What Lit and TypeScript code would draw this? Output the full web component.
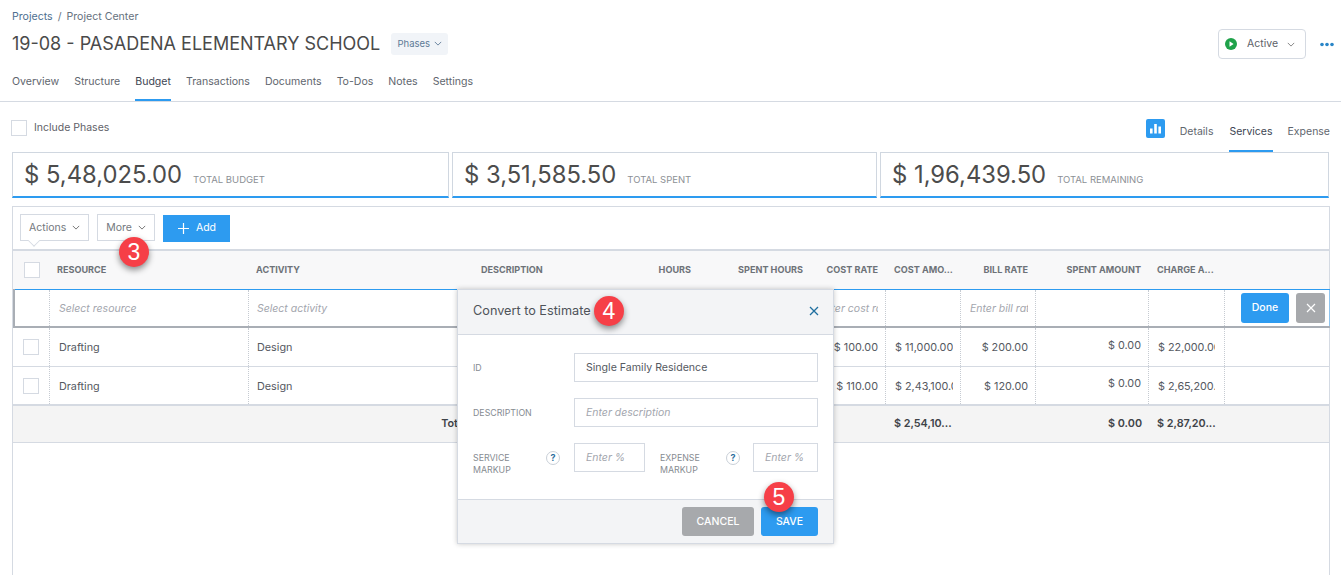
import { LitElement, html, css } from "lit";
import { customElement } from "lit/decorators.js";

const chev = html`<svg class="chev" viewBox="0 0 10 6" width="8" height="5"><path d="M1 1l4 4 4-4" fill="none" stroke="currentColor" stroke-width="1.1"/></svg>`;

@customElement("app-root")
export class AppRoot extends LitElement {
  static styles = css`
    :host { display: block; position: relative; height: 575px; overflow: hidden; background: #fff; font-family: Inter, "Liberation Sans", sans-serif; font-size: 11px; line-height: 12px; color: #555a60; }
    * { box-sizing: border-box; }
    .crumbs { padding: 11px 12px 0; height: 29px; font-size: 10.6px; color: #66717d; }
    .crumbs a { color: #4f6f90; }
    .crumbs i { font-style: normal; margin: 0 5px; }
    .titlebar { display: flex; align-items: center; height: 30px; padding: 0 7px 0 12px; }
    h1 { margin: 0; font-size: 18px; line-height: 22px; font-weight: 400; color: #4a4a4a; }
    .chip { margin: 0 0 1px 11px; height: 22px; width: 57px; display: flex; align-items: center; justify-content: center; gap: 4px; background: #f1f4f8; border-radius: 3px; font-size: 9.5px; color: #5d7a96; }
    .spacer { flex: 1; }
    .status { width: 88px; height: 30px; border: 1px solid #d5dae2; border-radius: 4px; display: flex; align-items: center; padding-left: 6px; color: #5c6168; font-size: 10.5px; }
    .status span { margin: 0 9px 0 10px; }
    .status .chev { color: #777; }
    .dots { margin-left: 14px; display: flex; }
    .tabs { display: flex; gap: 15px; height: 43px; padding-left: 12px; border-bottom: 1px solid #d5dae2; }
    .tab { height: 42px; padding-top: 17px; color: #5f666e; font-size: 10.55px; border-bottom: 2px solid transparent; }
    .tab.on { color: #3d4552; border-bottom-color: #2d9bf0; }
    .sub { display: flex; height: 50px; padding: 0 11px; }
    .include { display: flex; align-items: center; gap: 7px; color: #5f5f68; font-size: 10.5px; padding-top: 1px; }
    .box { display: block; width: 16px; height: 16px; border: 1px solid #d5dae2; background: #fff; flex: none; }
    .chart { align-self: flex-start; margin: 17px 15px 0 0; width: 19px; height: 19px; border-radius: 2px; background: #2d9bf0; display: flex; }
    .subtabs { display: flex; gap: 15px; }
    .subtab { height: 50px; padding-top: 24px; border-bottom: 2px solid transparent; color: #5f666e; font-size: 10.5px; }
    .subtab:first-child { margin-right: 1px; }
    .subtab.on { color: #3d4552; border-bottom-color: #2d9bf0; }
    .cards { display: flex; gap: 3px; margin: 0 12px; height: 46px; }
    .card { border: 1px solid #d0d7e0; border-bottom: 2px solid #2d9bf0; display: flex; align-items: baseline; padding: 8px 0 0 11px; }
    .card b { font-weight: 400; font-size: 23.8px; line-height: 28px; color: #4c4c4c; }
    .card span { margin-left: 11px; font-size: 9.5px; color: #8c9095; }
    .panel { margin: 8px 11px 0 12px; border: 1px solid #d5dae2; border-bottom: 0; height: 400px; }
    .bar { display: flex; height: 44px; padding: 7px 7px 0; gap: 8px; align-items: flex-start; border-bottom: 2px solid #d5dae2; }
    .btn { position: relative; height: 27px; border: 1px solid #d5dae2; display: flex; align-items: center; padding: 0 8px 0 8px; gap: 6px; font-size: 10.5px; color: #73787e; background: #fff; }
    .btn .chev { color: #666; }
    .notch { position: absolute; left: 8px; bottom: -6px; width: 10px; height: 10px; border: 1px solid #d5dae2; border-top: 0; border-left: 0; background: #fff; transform: rotate(45deg) scale(.8); }
    .add { margin-top: 1px; height: 27px; width: 67px; padding-bottom: 1px; background: #2d9bf0; color: #fff; display: flex; align-items: center; justify-content: center; gap: 6px; font-size: 10.5px; }
    .row { display: grid; grid-template-columns: 37px 199px 224px 160px 66px 112px 75px 75px 75px 113px 76px 1fr; }
    .row > div { padding: 0 7px 0 8px; display: flex; align-items: center; white-space: nowrap; overflow: hidden; }
    .clip { display: block; width: 100%; overflow: hidden; text-align: right; }
    .head { height: 38px; background: #f8f8f9; font-size: 9.1px; font-weight: 700; color: #6d7278; }
    .head > div { padding-right: 8px; }
    .row > div.r { justify-content: flex-end; }
    .head > div:first-child { padding: 0 0 0 11px; }
    .head > div.tight { padding-left: 7px; }
    .edit { height: 39px; margin-right: -1px; box-shadow: inset 2px 0 #a9aeb5, inset 0 -2px #a9aeb5, inset 0 1px #2d9bf0, inset -1px 0 #8fc4ee; }
    .edit > div, .data > div { border-right: 1px dotted #c6cbd2; }
    .edit > div { margin: 1px 0 2px; }
    .ph { color: #a3a6ae; font-style: italic; font-size: 10.5px; }
    .row.edit > div:last-child { border: 0; padding: 0 0 0 16px; gap: 7px; overflow: visible; }
    .row.edit > div.ph { padding-top: 1px; }
    .row.edit > div.first, .row.data > div.first { padding-left: 9px; }
    .row.edit > div.bill { padding-left: 9px; }
    .done { flex: none; width: 48px; height: 30px; border-radius: 3px; background: #2d9bf0; color: #fff; font-size: 10.5px; font-weight: 500; display: flex; align-items: center; justify-content: center; }
    .x { flex: none; width: 29px; height: 30px; border-radius: 3px; background: #a7a9ac; display: flex; align-items: center; justify-content: center; }
    .data { height: 39px; border-bottom: 1px solid #d5dae2; color: #55595f; font-size: 10.8px; }
    .data.last { border-bottom: 2px solid #d5dae2; }
    .row.data > div { padding-top: 1px; }
    .row.data.last > div { padding-top: 2px; }
    .row.data > div:first-child { padding: 0 0 0 10px; }
    .data > div:last-child { border: 0; }
    .row.data > div.up { padding-top: 0; padding-bottom: 3px; }
    .row.data > div.amount { padding-left: 9px; }
    .row.data > div.charge { padding: 1px 9px 0; }
    .row.data.last > div.charge { padding-top: 2px; }
    .total { height: 37px; background: #f4f4f4; border-bottom: 1px solid #d5dae2; font-weight: 600; color: #3f4348; font-size: 10.8px; }
    .modal { position: absolute; left: 457px; top: 289px; width: 377px; height: 255px; background: #fff; border: 1px solid #d5dae2; box-shadow: 0 0 5px rgba(0,0,0,.22); display: flex; flex-direction: column; }
    .mhead { height: 45px; flex: none; background: #f3f4f6; border-bottom: 1px solid #d5dae2; display: flex; align-items: center; justify-content: space-between; padding: 0 14px 3px 15px; font-size: 12.7px; color: #4e5359; }
    .mbody { flex: 1; display: grid; grid-template-columns: 101px 71px 15px 66px 27px 65px; padding: 18px 15px 0 15px; row-gap: 16px; grid-auto-rows: 29px; align-items: center; }
    .lab { font-size: 8.8px; line-height: 12px; color: #868b91; }
    .lab.two { align-self: start; margin-top: 9px; white-space: nowrap; }
    .inp { height: 29px; border: 1px solid #d5dae2; display: flex; align-items: center; padding-left: 11px; color: #55595f; font-size: 10.6px; }
    .inp.ph { color: #a3a6ae; font-size: 10.5px; }
    .wide { grid-column: 2 / -1; }
    .q { width: 14px; height: 14px; border-radius: 50%; border: 1px solid #c9d0d8; color: #2d6f9e; font-size: 9px; font-weight: 700; display: flex; align-items: center; justify-content: center; flex: none; }
    .qrow { display: flex; justify-content: space-between; padding-right: 14px; height: 29px; }
    .qrow .q { margin-top: 8px; }
    .mfoot { height: 44px; flex: none; background: #f3f4f6; border-top: 1px solid #d5dae2; display: flex; justify-content: flex-end; align-items: center; gap: 7px; padding: 0 15px 0 0; }
    .mbtn { width: 72px; height: 29px; border-radius: 3px; background: #a7a9ac; color: #fff; font-size: 10.5px; font-weight: 500; display: flex; align-items: center; justify-content: center; }
    .mbtn.save { width: 57px; background: #2d9bf0; }
    .pin { position: absolute; width: 30px; height: 30px; border-radius: 50%; background: #f63f47; color: #fff; font-family: "Liberation Sans", sans-serif; font-size: 23px; line-height: 30px; text-align: center; box-shadow: 0 3px 6px rgba(0,0,0,.45); }
    .p3 { left: 119px; top: 237px; }
    .p4 { left: 594px; top: 296px; }
    .p5 { left: 764px; top: 482px; }
  `;

  dataRow(rate: string, amt: string, bill: string, charge: string, last = false) {
    return html`<div class="row data ${last ? "last" : ""}">
      <div><span class="box"></span></div><div class="first">Drafting</div><div>Design</div><div></div><div></div><div></div>
      <div class="r">${rate}</div><div class="amount"><span class="clip">${amt}</span></div><div class="r">${bill}</div>
      <div class="r up">$ 0.00</div><div class="charge"><span class="clip">${charge}</span></div><div></div>
    </div>`;
  }

  render() {
    return html`
      <div class="crumbs"><a>Projects</a><i>/</i>Project Center</div>
      <div class="titlebar">
        <h1>19-08 - PASADENA ELEMENTARY SCHOOL</h1>
        <div class="chip">Phases ${chev}</div>
        <div class="spacer"></div>
        <div class="status">
          <svg width="12" height="12" viewBox="0 0 12 12"><circle cx="6" cy="6" r="6" fill="#1fa24a"/><path d="M4.5 3.3L8.6 6 4.5 8.7z" fill="#fff"/></svg>
          <span>Active</span>${chev}
        </div>
        <div class="dots"><svg width="14" height="5" viewBox="0 0 14 5"><g fill="#2a86c8"><circle cx="2" cy="2.5" r="1.8"/><circle cx="7" cy="2.5" r="1.8"/><circle cx="12" cy="2.5" r="1.8"/></g></svg></div>
      </div>
      <div class="tabs">
        ${["Overview", "Structure", "Budget", "Transactions", "Documents", "To-Dos", "Notes", "Settings"].map(t => html`<div class="tab ${t === "Budget" ? "on" : ""}">${t}</div>`)}
      </div>
      <div class="sub">
        <div class="include"><span class="box"></span>Include Phases</div>
        <div class="spacer"></div>
        <div class="chart"><svg width="19" height="19" viewBox="0 0 19 19"><g fill="#fff"><rect x="4" y="9.5" width="2.6" height="5"/><rect x="8.2" y="5" width="2.6" height="9.5"/><rect x="12.4" y="7.5" width="2.6" height="7"/></g></svg></div>
        <div class="subtabs">
          <div class="subtab">Details</div><div class="subtab on">Services</div><div class="subtab">Expense</div>
        </div>
      </div>
      <div class="cards">
        <div class="card" style="width:437px"><b>$ 5,48,025.00</b><span>TOTAL BUDGET</span></div>
        <div class="card" style="width:425px"><b>$ 3,51,585.50</b><span>TOTAL SPENT</span></div>
        <div class="card" style="width:449px"><b>$ 1,96,439.50</b><span>TOTAL REMAINING</span></div>
      </div>
      <div class="panel">
        <div class="bar">
          <div class="btn">Actions ${chev}<i class="notch"></i></div>
          <div class="btn">More ${chev}</div>
          <div class="add"><svg width="13" height="13" viewBox="0 0 13 13"><path d="M6.5 1v11M1 6.5h11" stroke="#fff" stroke-width="1.2" fill="none"/></svg>Add</div>
        </div>
        <div class="row head">
          <div><span class="box"></span></div>
          <div class="tight">RESOURCE</div><div class="tight">ACTIVITY</div><div>DESCRIPTION</div>
          <div class="r">HOURS</div><div class="r">SPENT HOURS</div><div class="r">COST RATE</div>
          <div>COST AMO...</div><div class="r">BILL RATE</div><div class="r">SPENT AMOUNT</div><div>CHARGE A...</div><div></div>
        </div>
        <div class="row edit">
          <div></div><div class="ph first">Select resource</div><div class="ph">Select activity</div>
          <div></div><div></div><div></div>
          <div class="ph"><span class="clip">Enter cost rate</span></div><div></div>
          <div class="ph bill"><span class="clip">Enter bill rate</span></div><div></div><div></div>
          <div>
            <div class="done">Done</div>
            <div class="x"><svg width="10" height="10" viewBox="0 0 10 10"><path d="M1 1l8 8M9 1l-8 8" stroke="#fff" stroke-width="1.2" fill="none"/></svg></div>
          </div>
        </div>
        ${this.dataRow("$ 100.00", "$ 11,000.00", "$ 200.00", "$ 22,000.00")}
        ${this.dataRow("$ 110.00", "$ 2,43,100.00", "$ 120.00", "$ 2,65,200.00", true)}
        <div class="row total">
          <div class="r" style="grid-column:1/4;padding-right:6px">Total</div>
          <div></div><div></div><div></div><div></div>
          <div>$ 2,54,10...</div><div></div>
          <div class="r">$ 0.00</div><div>$ 2,87,20...</div><div></div>
        </div>
      </div>

      <div class="modal">
        <div class="mhead"><span>Convert to Estimate</span>
          <svg width="10" height="10" viewBox="0 0 10 10"><path d="M1 1l8 8M9 1l-8 8" stroke="#1f6f9f" stroke-width="1.3" fill="none"/></svg>
        </div>
        <div class="mbody">
          <div class="lab">ID</div><div class="inp wide">Single Family Residence</div>
          <div class="lab">DESCRIPTION</div><div class="inp wide ph">Enter description</div>
          <div class="qrow"><div class="lab two">SERVICE<br>MARKUP</div><div class="q">?</div></div>
          <div class="inp ph">Enter %</div>
          <div></div>
          <div class="lab two">EXPENSE<br>MARKUP</div>
          <div class="q">?</div>
          <div class="inp ph">Enter %</div>
        </div>
        <div class="mfoot"><div class="mbtn">CANCEL</div><div class="mbtn save">SAVE</div></div>
      </div>

      <div class="pin p3">3</div>
      <div class="pin p4">4</div>
      <div class="pin p5">5</div>
    `;
  }
}
